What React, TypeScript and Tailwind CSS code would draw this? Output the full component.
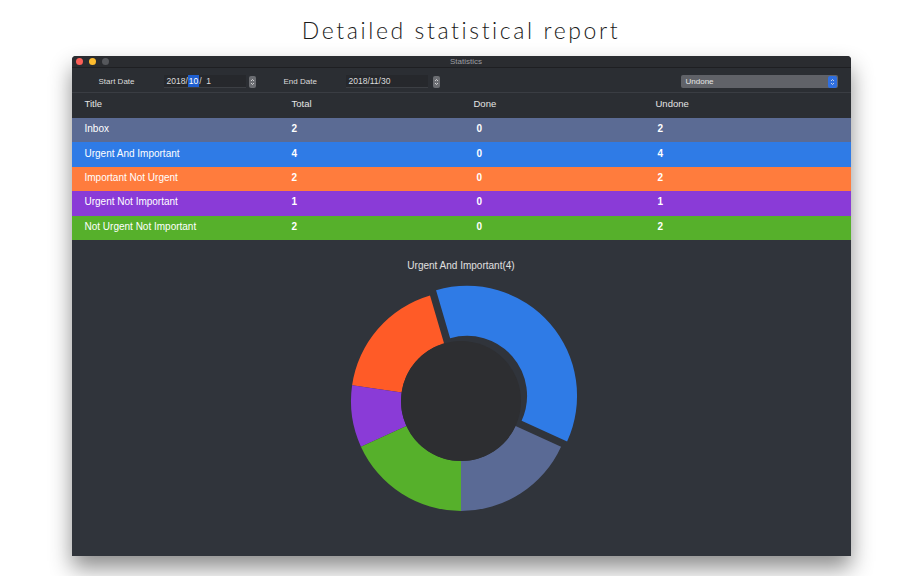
import React from 'react';

const rows = [
  { title: 'Inbox', total: 2, done: 0, undone: 2, bg: 'bg-[#5b6b94]' },
  { title: 'Urgent And Important', total: 4, done: 0, undone: 4, bg: 'bg-[#2f7be6]' },
  { title: 'Important Not Urgent', total: 2, done: 0, undone: 2, bg: 'bg-[#ff7c3d]' },
  { title: 'Urgent Not Important', total: 1, done: 0, undone: 1, bg: 'bg-[#8a3bd7]' },
  { title: 'Not Urgent Not Important', total: 2, done: 0, undone: 2, bg: 'bg-[#56b02b]' },
];

// donut slices, counter-clockwise from 6 o'clock
const slices = [
  { value: 2, color: '#5a6a95' },
  { value: 4, color: '#2f7be6', explode: true },
  { value: 2, color: '#ff5b27' },
  { value: 1, color: '#8a3bd7' },
  { value: 2, color: '#56b02b' },
];

function pt(cx: number, cy: number, r: number, deg: number) {
  const a = (deg * Math.PI) / 180;
  return [cx + r * Math.sin(a), cy - r * Math.cos(a)];
}

function arc(cx: number, cy: number, r0: number, r1: number, a0: number, a1: number) {
  // a0 > a1, drawn counter-clockwise
  const [x1, y1] = pt(cx, cy, r1, a0);
  const [x2, y2] = pt(cx, cy, r1, a1);
  const [x3, y3] = pt(cx, cy, r0, a1);
  const [x4, y4] = pt(cx, cy, r0, a0);
  const large = a0 - a1 > 180 ? 1 : 0;
  return `M${x1} ${y1} A${r1} ${r1} 0 ${large} 0 ${x2} ${y2} L${x3} ${y3} A${r0} ${r0} 0 ${large} 1 ${x4} ${y4} Z`;
}

function Donut() {
  const total = slices.reduce((s, x) => s + x.value, 0);
  const cx = 120;
  const cy = 120;
  let start = 180;
  return (
    <svg width="240" height="240" viewBox="0 0 240 240">
      {slices.map((s, i) => {
        const sweep = (s.value / total) * 360;
        const a0 = start;
        const a1 = start - sweep;
        start = a1;
        let dx = 0;
        let dy = 0;
        if (s.explode) {
          const [mx, my] = pt(0, 0, 8, (a0 + a1) / 2);
          dx = mx;
          dy = my;
        }
        return <path key={i} d={arc(cx + dx, cy + dy, 60, 110, a0, a1)} fill={s.color} />;
      })}
      <circle cx={cx} cy={cy} r="60" fill="#2d2e31" />
    </svg>
  );
}

function Stepper({ blue }: { blue?: boolean }) {
  return (
    <div
      className={`w-[7px] h-[12px] rounded-[2px] flex items-center justify-center ${
        blue ? 'bg-[#2f6fe0] w-[9px]' : 'bg-[#6b6d72]'
      }`}
    >
      <svg width="5" height="8" viewBox="0 0 5 8">
        <path d="M1 3 L2.5 1.5 L4 3 M1 5 L2.5 6.5 L4 5" stroke="#e8e8e8" strokeWidth="0.8" fill="none" />
      </svg>
    </div>
  );
}

export default function App() {
  return (
    <div
      className="w-[922px] h-[576px] bg-white flex flex-col items-center overflow-hidden"
      style={{ fontFamily: '"Liberation Sans", Arial, sans-serif' }}
    >
      <h1
        className="mt-[16px] h-[28px] text-[23px] leading-[28px] font-light tracking-[2.6px] text-[#1a1a1a]"
        style={{ fontFamily: 'Lato, "Open Sans", sans-serif' }}
      >
        Detailed statistical report
      </h1>

      {/* window */}
      <div className="mt-[12px] w-[779px] h-[500px] bg-[#30343b] rounded-t-[4px] shadow-[0_12px_22px_rgba(0,0,0,0.45)] flex flex-col">
        {/* title bar */}
        <div className="relative h-[12px] bg-[#2a2c30] rounded-t-[4px] flex items-center border-b border-[#1e1f22]">
          <div className="flex gap-[6px] pl-[4px]">
            <span className="w-[7px] h-[7px] rounded-full bg-[#fc5f57]" />
            <span className="w-[7px] h-[7px] rounded-full bg-[#fdbc2e]" />
            <span className="w-[7px] h-[7px] rounded-full bg-[#55575b]" />
          </div>
          <div className="flex-1 text-center text-[8px] text-[#9c9ea2] pr-[27px]">Statistics</div>
        </div>

        {/* toolbar */}
        <div className="h-[25px] pt-[3px] bg-[#2b2e33] border-b border-[#3a3d43] flex items-center text-[8px] text-[#dcdcdc]">
          <span className="ml-[27px] w-[65px]">Start Date</span>
          <div className="w-[82px] h-[13px] bg-[#26282c] border-b border-[#3c3f44] flex items-center pl-[3px] text-[8.5px]">
            <span>2018/</span>
            <span className="bg-[#1f5fd0] text-white px-[1px]">10</span>
            <span>/&nbsp;&nbsp;1</span>
          </div>
          <div className="ml-[3px]"><Stepper /></div>
          <span className="ml-[28px] w-[62px]">End Date</span>
          <div className="w-[82px] h-[13px] bg-[#26282c] border-b border-[#3c3f44] flex items-center pl-[3px] text-[8.5px]">
            2018/11/30
          </div>
          <div className="ml-[5px]"><Stepper /></div>
          <div className="ml-auto mr-[13px] w-[157px] h-[13px] bg-[#606268] rounded-[2px] flex items-center justify-between pl-[5px] pr-[1px]">
            <span className="text-[#e6e6e6]">Undone</span>
            <Stepper blue />
          </div>
        </div>

        {/* header */}
        <div className="h-[25px] pb-[2px] bg-[#2b2e33] grid grid-cols-[207px_182px_182px_1fr] items-center pl-[13px] text-[9.5px] text-[#e4e4e4]">
          <span>Title</span>
          <span>Total</span>
          <span>Done</span>
          <span>Undone</span>
        </div>

        {/* rows */}
        {rows.map((r) => (
          <div
            key={r.title}
            className={`h-[24.4px] pb-[3px] ${r.bg} grid grid-cols-[207px_182px_182px_1fr] items-center pl-[13px] text-[10px] text-white`}
          >
            <span>{r.title}</span>
            <span className="font-bold">{r.total}</span>
            <span className="font-bold pl-[3px]">{r.done}</span>
            <span className="font-bold pl-[2px]">{r.undone}</span>
          </div>
        ))}

        {/* chart */}
        <div className="flex-1 flex flex-col items-center">
          <div className="mt-[20px] text-[10px] leading-[12px] text-[#e0e0e0]">Urgent And Important(4)</div>
          <div className="mt-[9px]">
            <Donut />
          </div>
        </div>
      </div>
    </div>
  );
}
